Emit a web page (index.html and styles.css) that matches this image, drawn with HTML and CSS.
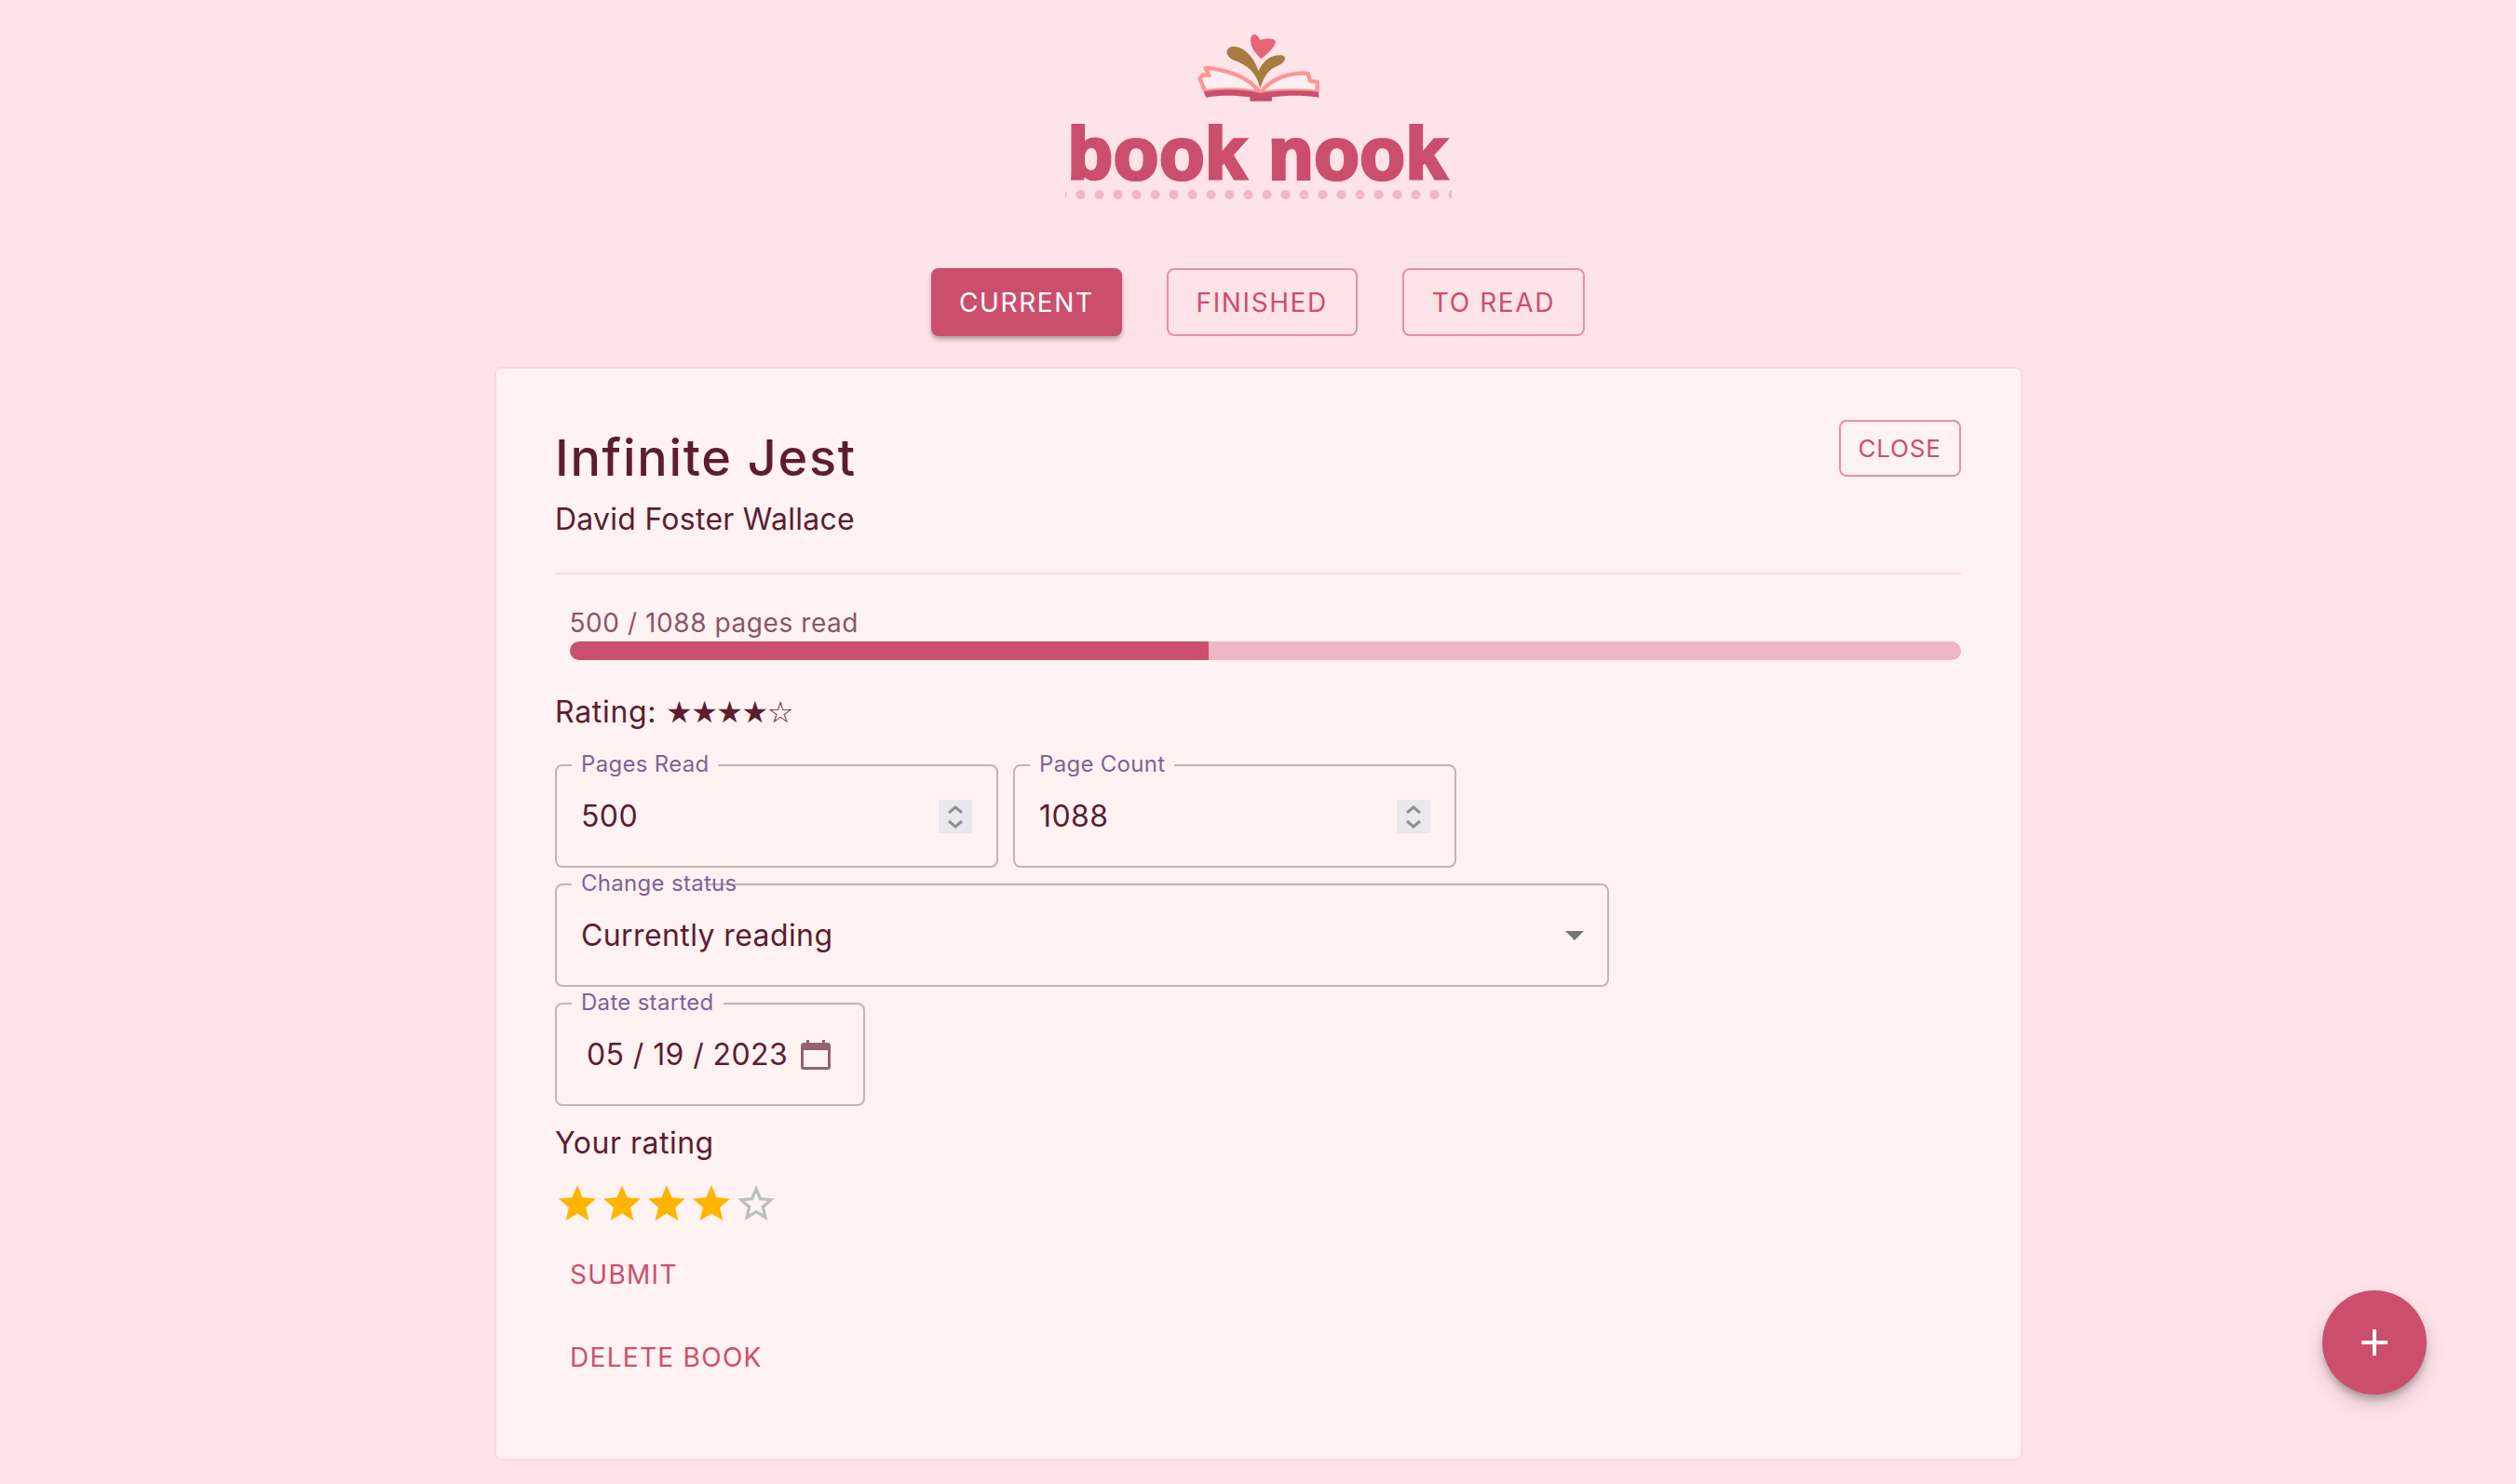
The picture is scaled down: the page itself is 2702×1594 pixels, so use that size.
FILE: index.html
```html
<!DOCTYPE html>
<html lang="en">
<head>
    <meta charset="UTF-8">
    <meta name="viewport" content="width=device-width, initial-scale=1.0">
    <title>book nook</title>
    <link rel="stylesheet" href="styles.css">
</head>
<body>
    <header class="logo">
        <svg class="logo-book" viewBox="540 70 420 235">
            <path fill="#e56577" d="M760 161C745 145 725 128 726 98C727 80 745 72 757 100C772 94 805 92 807 106C806 122 780 145 760 161Z"/>
            <path fill="#a67c40" d="M757 256C745 205 715 180 670 165C650 155 640 135 660 123C690 115 730 140 752 200C770 160 800 145 830 150C845 158 835 175 815 183C785 195 770 215 757 256Z"/>
            <path fill="#fdeff0" stroke="#ff9595" stroke-width="13" stroke-linejoin="round" d="M580 268L562 225L572 213L592 215L580 190C640 195 720 215 757 272C790 225 850 205 912 208L918 232L942 236L942 268C880 262 815 262 757 272C700 258 625 258 580 268Z"/>
            <path fill="#cb4f6d" d="M575 268C625 258 700 258 757 272C815 262 880 262 945 268L948 286C890 277 840 279 795 285L795 298L724 298L724 285C680 279 630 277 582 286Z"/>
        </svg>
        <div class="logo-name">book nook</div>
        <div class="logo-dots"></div>
    </header>

    <nav class="tabs">
        <button class="btn btn-solid">CURRENT</button>
        <button class="btn btn-outline">FINISHED</button>
        <button class="btn btn-outline">TO READ</button>
    </nav>

    <main class="card">
        <div class="card-head">
            <div>
                <h1 class="title">Infinite Jest</h1>
                <div class="author">David Foster Wallace</div>
            </div>
            <button class="btn btn-outline btn-small">CLOSE</button>
        </div>
        <hr class="divider">

        <div class="progress">
            <div class="progress-label">500 / 1088 pages read</div>
            <div class="progress-track">
                <div class="progress-fill" style="width: 45.96%"></div>
            </div>
        </div>

        <div class="rating-line">Rating: <span class="rating-stars">★★★★☆</span></div>

        <div class="field-row">
            <div class="field field-number">
                <span class="field-label">Pages Read</span>
                <span class="field-value">500</span>
                <span class="spinner">
                    <svg viewBox="0 0 36 36"><path d="M11 14l7-6 7 6M11 23l7 6 7-6"/></svg>
                </span>
            </div>
            <div class="field field-number">
                <span class="field-label">Page Count</span>
                <span class="field-value">1088</span>
                <span class="spinner">
                    <svg viewBox="0 0 36 36"><path d="M11 14l7-6 7 6M11 23l7 6 7-6"/></svg>
                </span>
            </div>
        </div>

        <div class="field field-select">
            <span class="field-label field-label-tight">Change status</span>
            <span class="field-value">Currently reading</span>
            <span class="select-arrow"></span>
        </div>

        <div class="field field-date">
            <span class="field-label">Date started</span>
            <span class="field-value">05 / 19 / 2023</span>
            <svg class="calendar" viewBox="0 0 32 32">
                <path fill="#916470" d="M6 0h3v3h14V0h3v3h3a3 3 0 0 1 3 3v23a3 3 0 0 1-3 3H3a3 3 0 0 1-3-3V6a3 3 0 0 1 3-3h3zM3 11v18h26V11z"/>
            </svg>
        </div>

        <div class="your-rating">Your rating</div>
        <div class="star-row">
            <svg class="star" viewBox="0 0 24 24"><path d="M12 17.27 18.18 21l-1.64-7.03L22 9.24l-7.19-.61L12 2 9.19 8.63 2 9.24l5.46 4.73L5.82 21z"/></svg>
            <svg class="star" viewBox="0 0 24 24"><path d="M12 17.27 18.18 21l-1.64-7.03L22 9.24l-7.19-.61L12 2 9.19 8.63 2 9.24l5.46 4.73L5.82 21z"/></svg>
            <svg class="star" viewBox="0 0 24 24"><path d="M12 17.27 18.18 21l-1.64-7.03L22 9.24l-7.19-.61L12 2 9.19 8.63 2 9.24l5.46 4.73L5.82 21z"/></svg>
            <svg class="star" viewBox="0 0 24 24"><path d="M12 17.27 18.18 21l-1.64-7.03L22 9.24l-7.19-.61L12 2 9.19 8.63 2 9.24l5.46 4.73L5.82 21z"/></svg>
            <svg class="star star-empty" viewBox="0 0 24 24"><path d="M22 9.24l-7.19-.62L12 2 9.19 8.63 2 9.24l5.46 4.73L5.82 21 12 17.27 18.18 21l-1.63-7.03L22 9.24zM12 15.4l-3.76 2.27 1-4.28-3.32-2.88 4.38-.38L12 6.1l1.71 4.04 4.38.38-3.32 2.88 1 4.28L12 15.4z"/></svg>
        </div>

        <div class="actions">
            <button class="btn btn-text">SUBMIT</button>
            <button class="btn btn-text">DELETE BOOK</button>
        </div>
    </main>

    <button class="fab">
        <svg viewBox="0 0 24 24"><path d="M19 13h-6v6h-2v-6H5v-2h6V5h2v6h6v2z"/></svg>
    </button>
</body>
</html>
```

FILE: styles.css
```css
html, body {
    height: 100%;
}
body {
    margin: 0;
    background: #fee3e7;
    color: #5c1d30;
    font-family: Inter, "DejaVu Sans", sans-serif;
    display: flex;
    flex-direction: column;
    align-items: center;
    overflow: hidden;
}

/* logo */
.logo {
    display: flex;
    flex-direction: column;
    align-items: center;
    padding-top: 33px;
}
.logo-book {
    width: 140px;
    height: 78px;
    display: block;
}
.logo-name {
    margin-top: 13px;
    height: 80px;
    font-family: "Liberation Sans", sans-serif;
    font-weight: 700;
    font-size: 78px;
    line-height: 82px;
    letter-spacing: 1.5px;
    color: #cb4f6d;
    -webkit-text-stroke: 4px #cb4f6d;
    white-space: nowrap;
}
.logo-dots {
    width: 415px;
    height: 10px;
    background: radial-gradient(circle, #efb8c5 4.5px, transparent 5.5px) 6.5px 0 / 20px 10px repeat-x;
}

/* buttons */
.btn {
    font-family: inherit;
    font-size: 28px;
    letter-spacing: 1.6px;
    border-radius: 8px;
    box-sizing: border-box;
    cursor: pointer;
    background: none;
    color: #cb4f6d;
    border: 0;
}
.btn-solid {
    background: #cb4f6d;
    color: #fff;
    box-shadow: 0 3px 5px -1px rgba(0, 0, 0, 0.25), 0 4px 6px rgba(0, 0, 0, 0.14);
}
.btn-outline {
    border: 2px solid #e98fa5;
}
.btn-small {
    font-size: 26px;
    letter-spacing: 0.8px;
    width: 131px;
    height: 61px;
    padding: 0;
    margin-top: -9px;
}
.btn-text {
    padding: 0 16px;
    height: 73px;
    align-self: flex-start;
    letter-spacing: 1.3px;
}

.tabs {
    display: flex;
    gap: 48px;
    margin-top: 74px;
}
.tabs .btn {
    height: 73px;
    padding: 0 30px;
}

/* card */
.card {
    box-sizing: border-box;
    width: 1641px;
    height: 1175px;
    margin-top: 33px;
    padding: 64px 64px 0 63.5px;
    background: #fff2f2;
    border: 2px solid #fbd9dd;
    border-radius: 8px;
    flex-shrink: 0;
}
.card-head {
    display: flex;
    justify-content: space-between;
    align-items: flex-start;
}
.title {
    margin: 0;
    font-size: 54px;
    font-weight: 500;
    line-height: 64px;
    letter-spacing: 1.7px;
}
.author {
    margin-top: 12px;
    font-size: 32px;
    line-height: 44px;
    letter-spacing: 0.26px;
}
.divider {
    border: 0;
    height: 2px;
    background: #fbd9dd;
    margin: 35px 0 0;
}

.progress {
    margin-top: 32px;
    padding-left: 15.5px;
}
.progress-label {
    font-size: 28px;
    line-height: 40px;
    letter-spacing: 0.57px;
    color: #8c5566;
}
.progress-track {
    height: 20px;
    border-radius: 10px;
    background: #efb6c4;
    overflow: hidden;
}
.progress-fill {
    height: 100%;
    background: #cb4f6d;
}

.rating-line {
    margin-top: 32px;
    font-size: 32px;
    line-height: 48px;
    letter-spacing: 0.7px;
}
.rating-stars {
    font-family: "DejaVu Sans", sans-serif;
    letter-spacing: -1.5px;
}

/* form fields */
.field-row {
    display: flex;
    gap: 16.5px;
    margin-top: 32px;
}
.field {
    position: relative;
    box-sizing: border-box;
    height: 111px;
    display: flex;
    align-items: center;
    padding: 0 26px;
    border: 2px solid #c4b3b5;
    border-radius: 8px;
    font-size: 32px;
    letter-spacing: 0.4px;
    white-space: nowrap;
}
.field-label {
    position: absolute;
    top: -16px;
    left: 16px;
    padding: 0 10px;
    background: #fff2f2;
    color: #7b6499;
    font-size: 24px;
    line-height: 28px;
    letter-spacing: 0.3px;
}
.field-label-tight {
    padding: 0 0 0 10px;
    background: linear-gradient(#fff2f2, #fff2f2) left / calc(100% - 32px) 100% no-repeat;
}
.field-number {
    width: 475.5px;
    justify-content: space-between;
}
.spinner {
    width: 36px;
    height: 36px;
    background: #e9e9ed;
}
.spinner svg {
    display: block;
}
.spinner path {
    fill: none;
    stroke: #8e8e96;
    stroke-width: 3;
}
.field-select {
    width: 1131.5px;
    margin-top: 17px;
    justify-content: space-between;
}
.select-arrow {
    width: 0;
    height: 0;
    margin-right: -1px;
    border-left: 10px solid transparent;
    border-right: 10px solid transparent;
    border-top: 10px solid #757575;
}
.field-date {
    width: 332.5px;
    margin-top: 17px;
    gap: 14px;
    padding: 0 32px;
}
.calendar {
    width: 32px;
    height: 32px;
    flex-shrink: 0;
}

.your-rating {
    margin-top: 16px;
    font-size: 32px;
    line-height: 48px;
    letter-spacing: 0.5px;
}
.star-row {
    display: flex;
    margin-top: 17px;
}
.star {
    width: 48px;
    height: 48px;
    fill: #ffb400;
}
.star-empty {
    fill: #bdbdbd;
}

.actions {
    display: flex;
    flex-direction: column;
    gap: 16px;
    margin-top: 15px;
}

.fab {
    position: fixed;
    right: 96px;
    bottom: 96px;
    width: 112px;
    height: 112px;
    padding: 32px;
    border: 0;
    border-radius: 50%;
    background: #cb4f6d;
    box-shadow: 0 6px 10px -2px rgba(0, 0, 0, 0.3), 0 10px 20px 2px rgba(0, 0, 0, 0.12);
}
.fab svg {
    display: block;
    width: 48px;
    height: 48px;
    fill: #fff;
}
```
